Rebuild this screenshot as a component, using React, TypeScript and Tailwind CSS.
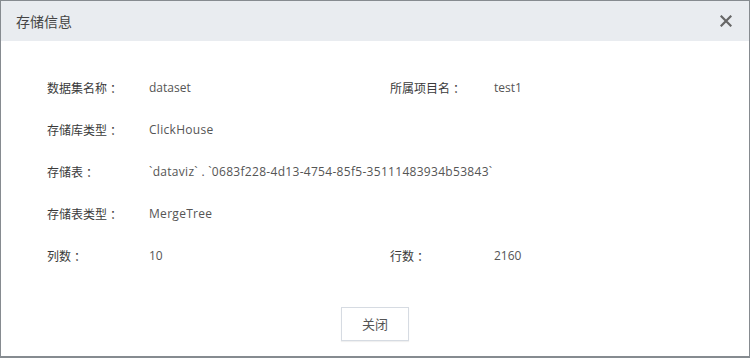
import React from "react";

const FONT = { fontFamily: '"Open Sans", "Noto Sans CJK SC", sans-serif' };
const CJK = { fontFamily: '"Noto Sans CJK SC", sans-serif' };

type Field = { label: string; value: string };

const ROWS: Field[][] = [
  [
    { label: "数据集名称", value: "dataset" },
    { label: "所属项目名", value: "test1" },
  ],
  [{ label: "存储库类型", value: "ClickHouse" }],
  [{ label: "存储表", value: "`dataviz` . `0683f228-4d13-4754-85f5-35111483934b53843`" }],
  [{ label: "存储表类型", value: "MergeTree" }],
  [
    { label: "列数", value: "10" },
    { label: "行数", value: "2160" },
  ],
];

function Label({ text, width }: { text: string; width: string }) {
  return (
    <span className={`${width} text-[#3a3a3a]`} style={CJK}>
      {text}
      <span className="ml-[3px]">：</span>
    </span>
  );
}

export default function App() {
  return (
    <div className="w-[750px] h-[358px] bg-white" style={FONT}>
      <div className="w-full h-full border border-[#868b90] border-b-2 flex flex-col">
        {/* Header */}
        <div className="h-[40px] bg-[#e9ecf0] flex items-center justify-between pl-[15px] pr-[17px] shrink-0">
          <span className="text-[14px] text-[#444]" style={CJK}>存储信息</span>
          <svg width="12" height="12" viewBox="0 0 12 12">
            <path d="M1.5 1.5 L10.5 10.5 M10.5 1.5 L1.5 10.5" stroke="#666" strokeWidth="2.2" strokeLinecap="square" />
          </svg>
        </div>

        {/* Body */}
        <div className="pt-[26px] pl-[46px] flex flex-col">
          {ROWS.map((row, i) => (
            <div key={i} className="h-[42px] flex items-center text-[12px]">
              <Label text={row[0].label} width="w-[102px]" />
              <span className={row[1] ? "w-[241px] text-[#555]" : "text-[#555] whitespace-nowrap tracking-[0.3px]"}>{row[0].value}</span>
              {row[1] && (
                <>
                  <Label text={row[1].label} width="w-[104px]" />
                  <span className="text-[#555]">{row[1].value}</span>
                </>
              )}
            </div>
          ))}
        </div>

        {/* Footer */}
        <div className="flex justify-center mt-[30px]">
          <button className="w-[68px] h-[34px] border border-[#d6dbe2] bg-white text-[13px] text-[#555] shadow-[0_1px_1px_rgba(0,0,0,0.06)]" style={CJK}>
            关闭
          </button>
        </div>
      </div>
    </div>
  );
}
